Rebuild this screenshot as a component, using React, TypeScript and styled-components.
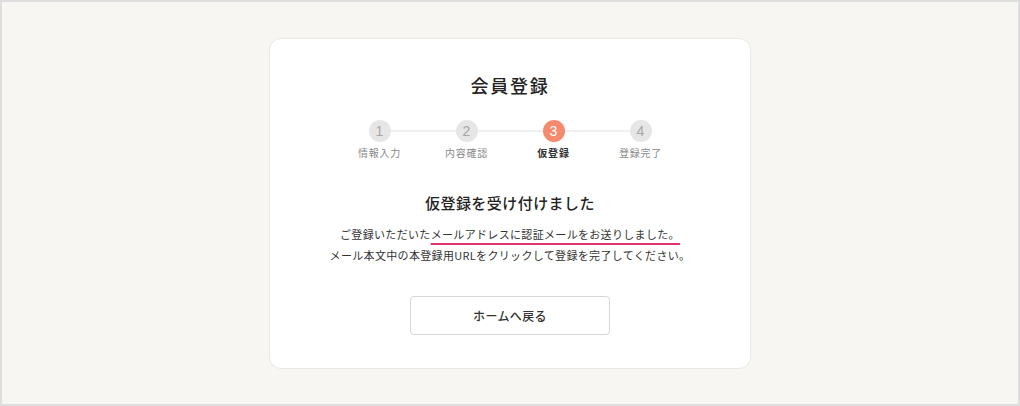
import React from "react";
import styled, { createGlobalStyle } from "styled-components";

const GlobalStyle = createGlobalStyle`
  html, body { margin: 0; padding: 0; }
  body {
    font-family: "Noto Sans CJK JP", "Noto Sans", sans-serif;
    color: #333;
    -webkit-font-smoothing: antialiased;
  }
`;

const Page = styled.div`
  box-sizing: border-box;
  width: 1020px;
  height: 406px;
  border: 2px solid #dedede;
  background: #f7f6f2;
  display: flex;
  align-items: center;
  justify-content: center;
`;

const Card = styled.section`
  box-sizing: border-box;
  width: 482px;
  height: 331px;
  background: #fff;
  border: 1px solid #ebe8e3;
  border-radius: 12px;
  padding: 36px 0 0;
  display: flex;
  flex-direction: column;
  align-items: center;
`;

const Title = styled.h1`
  margin: 0;
  font-size: 18px;
  line-height: 20px;
  font-weight: 500;
  letter-spacing: 0.1em;
  color: #222;
`;

const Steps = styled.ol`
  list-style: none;
  margin: 25px 0 0;
  padding: 0;
  display: flex;
`;

const Step = styled.li<{ $last?: boolean }>`
  position: relative;
  width: 87px;
  display: flex;
  flex-direction: column;
  align-items: center;
  &::after {
    content: "";
    display: ${(p) => (p.$last ? "none" : "block")};
    position: absolute;
    top: 10px;
    left: 50%;
    width: 87px;
    height: 2px;
    background: #f0f0f0;
    z-index: 0;
  }
`;

const Circle = styled.span<{ $active?: boolean }>`
  position: relative;
  z-index: 1;
  width: 22px;
  height: 22px;
  border-radius: 50%;
  background: ${(p) => (p.$active ? "#f58b6e" : "#e6e6e6")};
  color: ${(p) => (p.$active ? "#fff" : "#a6a6a6")};
  font-family: "Liberation Sans", Arial, sans-serif;
  font-weight: 300;
  font-size: 14px;
  display: flex;
  align-items: center;
  justify-content: center;
`;

const StepLabel = styled.span<{ $active?: boolean }>`
  margin-top: 5px;
  font-size: 10px;
  line-height: 12px;
  letter-spacing: 0.08em;
  font-weight: ${(p) => (p.$active ? 700 : 400)};
  color: ${(p) => (p.$active ? "#333" : "#8a8a8a")};
  white-space: nowrap;
`;

const Heading = styled.h2`
  margin: 36px 0 0;
  font-size: 15px;
  line-height: 16px;
  font-weight: 500;
  letter-spacing: 0.03em;
  color: #222;
`;

const Body = styled.p`
  margin: 13px 0 0;
  font-size: 11px;
  line-height: 21px;
  letter-spacing: 0.03em;
  text-align: center;
  color: #333;
`;

const Mark = styled.span`
  text-decoration: underline;
  text-decoration-color: #e3336a;
  text-decoration-thickness: 1.5px;
  text-underline-offset: 4px;
`;

const Button = styled.button`
  margin-top: 30px;
  box-sizing: border-box;
  width: 200px;
  height: 39px;
  background: #fff;
  border: 1px solid #d6d6d6;
  border-radius: 4px;
  font-family: "Noto Sans CJK JP", "Noto Sans", sans-serif;
  font-size: 12px;
  font-weight: 500;
  letter-spacing: 0.03em;
  color: #333;
  cursor: pointer;
`;

const steps = ["情報入力", "内容確認", "仮登録", "登録完了"];
const activeIndex = 2;

export default function App() {
  return (
    <>
      <GlobalStyle />
      <Page>
        <Card>
          <Title>会員登録</Title>
          <Steps>
            {steps.map((label, i) => (
              <Step key={label} $last={i === steps.length - 1}>
                <Circle $active={i === activeIndex}>{i + 1}</Circle>
                <StepLabel $active={i === activeIndex}>{label}</StepLabel>
              </Step>
            ))}
          </Steps>
          <Heading>仮登録を受け付けました</Heading>
          <Body>
            ご登録いただいた<Mark>メールアドレスに認証メールをお送りしました。</Mark>
            <br />
            メール本文中の本登録用URLをクリックして登録を完了してください。
          </Body>
          <Button type="button">ホームへ戻る</Button>
        </Card>
      </Page>
    </>
  );
}
